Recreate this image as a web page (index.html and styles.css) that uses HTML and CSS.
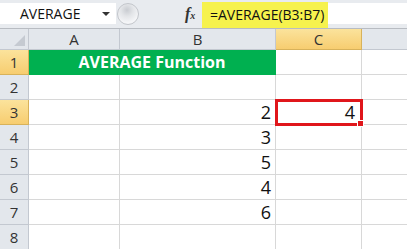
FILE: index.html
```html
<!DOCTYPE html>
<html lang="en">
<head>
    <meta charset="UTF-8">
    <title>AVERAGE Function</title>
    <link rel="stylesheet" href="styles.css">
</head>
<body>

    <div class="formula-bar">
        <div class="name-box">
            <span>AVERAGE</span>
            <span class="arrow"></span>
        </div>
        <div class="knob"></div>
        <div class="fx">f<sub>x</sub></div>
        <div class="formula">
            <span class="highlight">=AVERAGE(B3:B7)</span>
        </div>
    </div>

    <div class="sheet">
        <div class="corner"><span class="tri"></span></div>
        <div class="col-head">A</div>
        <div class="col-head">B</div>
        <div class="col-head active">C</div>
        <div class="col-head last"></div>

        <div class="row-head active">1</div>
        <div class="cell title">AVERAGE Function</div>
        <div class="cell"></div>
        <div class="cell last"></div>

        <div class="row-head">2</div>
        <div class="cell"></div><div class="cell"></div><div class="cell"></div><div class="cell last"></div>

        <div class="row-head active">3</div>
        <div class="cell"></div><div class="cell num">2</div><div class="cell num selected">4</div><div class="cell last"></div>

        <div class="row-head">4</div>
        <div class="cell"></div><div class="cell num">3</div><div class="cell"></div><div class="cell last"></div>

        <div class="row-head">5</div>
        <div class="cell"></div><div class="cell num">5</div><div class="cell"></div><div class="cell last"></div>

        <div class="row-head">6</div>
        <div class="cell"></div><div class="cell num">4</div><div class="cell"></div><div class="cell last"></div>

        <div class="row-head">7</div>
        <div class="cell"></div><div class="cell num">6</div><div class="cell"></div><div class="cell last"></div>

        <div class="row-head">8</div>
        <div class="cell"></div><div class="cell"></div><div class="cell"></div><div class="cell last"></div>
    </div>

</body>
</html>
```

FILE: styles.css
```css
body {
    margin: 0;
    width: 407px;
    height: 249px;
    overflow: hidden;
    background: #ffffff;
    font-family: "Open Sans", "Liberation Sans", sans-serif;
    color: #222;
}

.formula-bar {
    display: flex;
    align-items: center;
    height: 29px;
    background: #e8ebef;
    border-bottom: 1px solid #b8bcc2;
    box-sizing: border-box;
}

.name-box {
    display: flex;
    align-items: center;
    justify-content: space-between;
    width: 116px;
    height: 21px;
    margin-top: -1px;
    padding: 0 6px 0 20px;
    box-sizing: border-box;
    background: #ffffff;
    font-size: 14px;
    color: #111;
}

.arrow {
    width: 0;
    height: 0;
    border-left: 4px solid transparent;
    border-right: 4px solid transparent;
    border-top: 4px solid #333;
}

.knob {
    width: 22px;
    height: 22px;
    margin-left: 1px;
    margin-top: -1px;
    border-radius: 50%;
    background: radial-gradient(circle at 45% 30%, #c9ccd1 0, #e3e5e8 35%, #f4f5f7 70%);
    border: 1px solid #c3c6cb;
    box-sizing: border-box;
}

.fx {
    flex: 0 0 auto;
    margin-left: 46px;
    width: 17px;
    font-family: "Liberation Serif", serif;
    font-style: italic;
    font-weight: bold;
    font-size: 16px;
    color: #333;
}

.fx sub {
    font-size: 10px;
    vertical-align: 0;
}

.formula {
    flex: 1;
    display: flex;
    align-items: center;
    height: 21px;
    margin-top: -1px;
    background: #ffffff;
}

.highlight {
    display: flex;
    align-items: center;
    height: 26px;
    margin-top: 2px;
    padding: 0 4px 0 8px;
    background: #f6f24d;
    font-size: 14px;
    color: #111;
}

.sheet {
    display: grid;
    grid-template-columns: 29px 91px 156px 86px 1fr;
    grid-template-rows: 21px repeat(8, 25px);
}

.corner,
.col-head,
.row-head {
    display: flex;
    align-items: center;
    justify-content: center;
    background: #e3e7ec;
    border-right: 1px solid #c3c8d0;
    border-bottom: 1px solid #c3c8d0;
    font-size: 15px;
    color: #333;
}

.corner {
    position: relative;
}

.tri {
    position: absolute;
    right: 3px;
    bottom: 3px;
    width: 0;
    height: 0;
    border-left: 11px solid transparent;
    border-bottom: 11px solid #c5cad1;
}

.col-head.active,
.row-head.active {
    background: linear-gradient(#fbe39c, #f7cd70);
    border-color: #d8b25a;
}

.col-head.last,
.cell.last {
    border-right: none;
}

.cell {
    display: flex;
    align-items: center;
    padding: 0 4px;
    border-right: 1px solid #d8d8d8;
    border-bottom: 1px solid #d8d8d8;
    font-size: 18px;
    color: #111;
}

.num {
    justify-content: flex-end;
}

.title {
    grid-column: span 2;
    justify-content: center;
    background: #00b050;
    border-color: #00b050;
    color: #ffffff;
    font-weight: bold;
    font-size: 16px;
}

.selected {
    position: relative;
    padding-right: 6px;
    outline: 3px solid #e0161b;
    outline-offset: -2px;
}

.selected::after {
    content: "";
    position: absolute;
    right: -3px;
    bottom: -3px;
    width: 5px;
    height: 5px;
    background: #e0161b;
    border: 1px solid #ffffff;
}
```
